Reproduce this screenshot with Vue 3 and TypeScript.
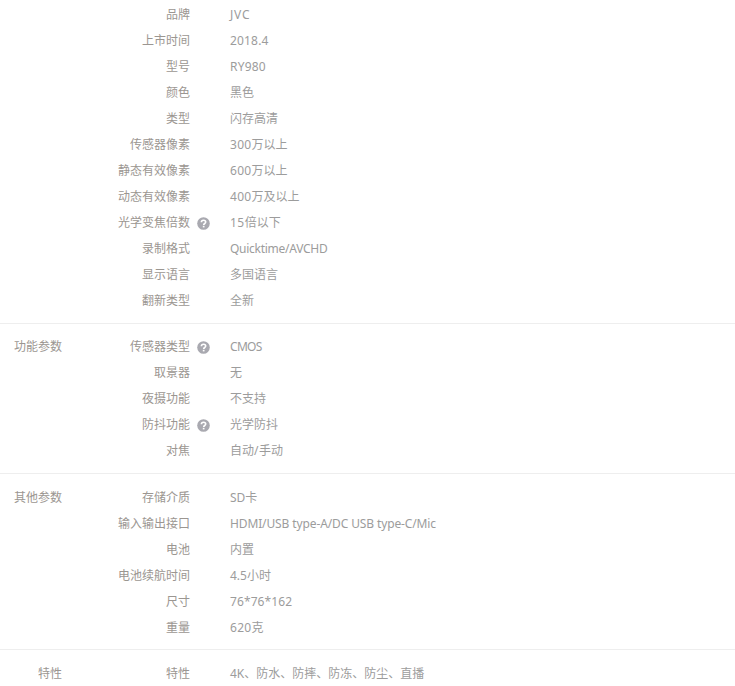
<script setup lang="ts">
interface Row { k: string; v: string; help?: boolean; ls?: number }
interface Group { title: string; rows: Row[]; cls: string }
const groups: Group[] = [
  { title: '', cls: 'g1', rows: [
    { k: '品牌', v: 'JVC', ls: 0.8 }, { k: '上市时间', v: '2018.4', ls: 0.17 }, { k: '型号', v: 'RY980', ls: 0.2 },
    { k: '颜色', v: '黑色' }, { k: '类型', v: '闪存高清' }, { k: '传感器像素', v: '300万以上', ls: 0.3 },
    { k: '静态有效像素', v: '600万以上', ls: 0.3 }, { k: '动态有效像素', v: '400万及以上', ls: 0.3 },
    { k: '光学变焦倍数', v: '15倍以下', help: true, ls: 0.5 }, { k: '录制格式', v: 'Quicktime/AVCHD', ls: -0.27 },
    { k: '显示语言', v: '多国语言' }, { k: '翻新类型', v: '全新' } ] },
  { title: '功能参数', cls: 'g2', rows: [
    { k: '传感器类型', v: 'CMOS', help: true, ls: -0.7 }, { k: '取景器', v: '无' }, { k: '夜摄功能', v: '不支持' },
    { k: '防抖功能', v: '光学防抖', help: true }, { k: '对焦', v: '自动/手动', ls: 0.5 } ] },
  { title: '其他参数', cls: 'g3', rows: [
    { k: '存储介质', v: 'SD卡' }, { k: '输入输出接口', v: 'HDMI/USB type-A/DC USB type-C/Mic', ls: -0.12 },
    { k: '电池', v: '内置' }, { k: '电池续航时间', v: '4.5小时' }, { k: '尺寸', v: '76*76*162', ls: 0.1 }, { k: '重量', v: '620克', ls: 0.3 } ] },
  { title: '特性', cls: 'g4', rows: [ { k: '特性', v: '4K、防水、防摔、防冻、防尘、直播' } ] },
]
function runs(text: string): { t: string; latin: boolean }[] {
  return text.split(/([\x20-\x7e]+)/).filter(Boolean).map((t) => ({ t, latin: /^[\x20-\x7e]/.test(t) }))
}
</script>

<template>
  <div class="page">
    <section v-for="g in groups" :key="g.cls" class="group" :class="g.cls">
      <div class="title">{{ g.title }}</div>
      <div class="rows">
        <div v-for="r in g.rows" :key="r.k" class="row">
          <div class="key">{{ r.k }}</div>
          <div class="tip">
            <svg v-if="r.help" width="13" height="13" viewBox="0 0 13 13">
              <circle cx="6.5" cy="6.5" r="6.3" fill="#a9a9b0" />
              <path d="M4.4 5.2C4.4 3.9 5.4 3.2 6.5 3.2s2.2.7 2.2 1.8c0 1.5-2 1.5-2 3" fill="none" stroke="#fff" stroke-width="1.6" />
              <rect x="5.8" y="8.8" width="1.7" height="1.6" fill="#fff" />
            </svg>
          </div>
          <div class="val"><span v-for="(p, i) in runs(r.v)" :key="i" :style="p.latin && r.ls ? { letterSpacing: r.ls + 'px' } : undefined">{{ p.t }}</span></div>
        </div>
      </div>
    </section>
  </div>
</template>

<style>
html, body { margin: 0; background: #fff; }
</style>

<style scoped>
.page {
  width: 735px;
  height: 686px;
  overflow: hidden;
  font: 12px/26px "Noto Sans", "Noto Sans CJK SC", sans-serif;
  color: #9b9691;
}
.group { display: flex; border-bottom: 1px solid #eeeeee; padding-bottom: 9px; margin-bottom: 10px; }
.g1 { padding-top: 2px; }
.g3 { padding-top: 1px; padding-bottom: 8px; margin-bottom: 11px; }
.g4 { border-bottom: 0; }
.title { width: 62px; text-align: right; flex: none; }
.rows { flex: 1; }
.row { display: flex; height: 26px; }
.key { width: 128px; text-align: right; flex: none; }
.tip { width: 40px; flex: none; display: flex; align-items: center; padding-left: 7px; box-sizing: border-box; }
.val { color: #9c9c9c; }
</style>
